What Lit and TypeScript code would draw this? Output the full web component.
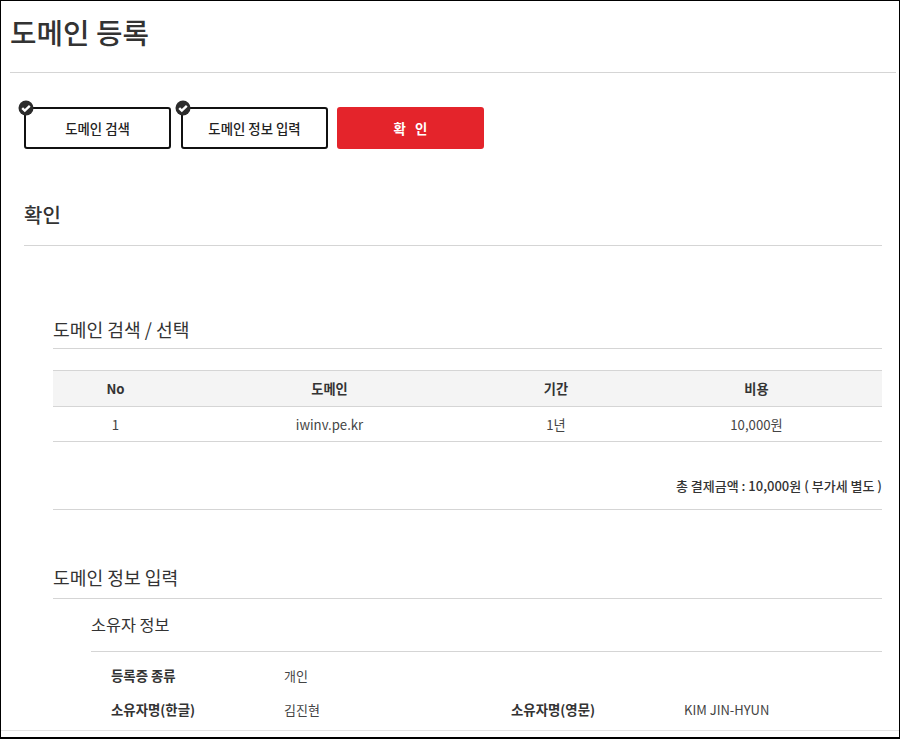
import { LitElement, html, css } from "lit";
import { customElement } from "lit/decorators.js";

const check = html`<svg class="chk" viewBox="0 0 16 16" aria-hidden="true"><circle cx="8" cy="8" r="7.5" fill="#2b2b2b"/><path d="M4.2 8.2l2.6 2.4 5-4.7" fill="none" stroke="#fff" stroke-width="2.4"/></svg>`;

@customElement("app-root")
export class AppRoot extends LitElement {
  static styles = css`
    :host {
      display: block;
      font-family: "Noto Sans CJK KR", "Noto Sans", sans-serif;
      color: #333;
    }
    * { box-sizing: border-box; }
    .frame {
      height: 739px;
      overflow: hidden;
      border: 1px solid #000;
      border-bottom-width: 2px;
      background: #fff;
      position: relative;
    }
    .title {
      margin: 0 3px 0 9px;
      height: 72px;
      padding-top: 10px;
      font-size: 28.8px;
      line-height: 41px;
      font-weight: 500;
      border-bottom: 1px solid #d5d5d5;
    }
    .steps {
      display: flex;
      margin: 34px 0 0 23px;
    }
    .step {
      position: relative;
      width: 147px;
      height: 42px;
      margin-right: 10px;
      border: 2px solid #111;
      border-radius: 3px;
      display: flex;
      align-items: center;
      justify-content: center;
      font-size: 13.4px;
      font-weight: 500;
      color: #222;
    }
    .step:nth-child(2) { margin-right: 9px; }
    .step.on {
      background: #e4242b;
      border-color: #e4242b;
      color: #fff;
      white-space: pre;
      font-weight: 700;
    }
    .chk {
      position: absolute;
      left: -8px;
      top: -9px;
      width: 16px;
      height: 16px;
    }
    .h2 {
      margin: 50px 17px 0 23px;
      height: 47px;
      padding-top: 1px;
      font-size: 20px;
      line-height: 30px;
      font-weight: 500;
      border-bottom: 1px solid #d5d5d5;
    }
    .body {
      margin: 0 17px 0 52px;
    }
    .h3 {
      height: 35px;
      font-size: 18.2px;
      line-height: 26px;
      font-weight: 400;
      border-bottom: 1px solid #d5d5d5;
    }
    .first { margin-top: 68px; padding-top: 2px; }
    table {
      width: 100%;
      margin-top: 21px;
      border-collapse: collapse;
      table-layout: fixed;
      font-size: 13.2px;
    }
    th {
      height: 36px;
      padding-bottom: 2px;
      background: #f4f4f4;
      border-top: 1px solid #d5d5d5;
      border-bottom: 1px solid #d5d5d5;
      font-weight: 700;
      color: #333;
    }
    td {
      height: 35px;
      text-align: center;
      border-bottom: 1px solid #d5d5d5;
      color: #444;
    }
    .total {
      height: 68px;
      padding-top: 35px;
      line-height: 18px;
      text-align: right;
      font-size: 13px;
      font-weight: 500;
      color: #333;
      border-bottom: 1px solid #d5d5d5;
    }
    .second { margin-top: 55px; height: 34px; line-height: 24px; }
    .sub {
      margin-left: 38px;
    }
    .h4 {
      height: 53px;
      padding-top: 13px;
      font-size: 16.3px;
      line-height: 24px;
      font-weight: 400;
      border-bottom: 1px solid #d5d5d5;
    }
    .info {
      display: grid;
      grid-template-columns: 173px 227px 173px 1fr;
      padding: 6px 0 0 20px;
      font-size: 13px;
      grid-auto-rows: 34px;
      align-items: center;
      color: #444;
    }
    .info b { font-size: 13.4px; font-weight: 700; color: #333; }
    .foot {
      position: absolute;
      left: 0;
      right: 0;
      bottom: 6px;
      border-bottom: 1px solid #e3e3e3;
    }
  `;

  render() {
    return html`<div class="frame">
      <h1 class="title">도메인 등록</h1>
      <div class="steps">
        <div class="step">${check}도메인 검색</div>
        <div class="step">${check}도메인 정보 입력</div>
        <div class="step on">확   인</div>
      </div>
      <div class="h2">확인</div>
      <div class="body">
        <div class="h3 first">도메인 검색 / 선택</div>
        <table>
          <colgroup><col style="width:125px" /><col style="width:303px" /><col style="width:150px" /><col /></colgroup>
          <thead><tr><th>No</th><th>도메인</th><th>기간</th><th>비용</th></tr></thead>
          <tbody><tr><td>1</td><td>iwinv.pe.kr</td><td>1년</td><td>10,000원</td></tr></tbody>
        </table>
        <div class="total">총 결제금액 : 10,000원 ( 부가세 별도 )</div>
        <div class="h3 second">도메인 정보 입력</div>
        <div class="sub">
          <div class="h4">소유자 정보</div>
          <div class="info">
            <b>등록증 종류</b><span>개인</span><span></span><span></span>
            <b>소유자명(한글)</b><span>김진현</span><b>소유자명(영문)</b><span>KIM JIN-HYUN</span>
          </div>
        </div>
      </div>
      <div class="foot"></div>
    </div>`;
  }
}
